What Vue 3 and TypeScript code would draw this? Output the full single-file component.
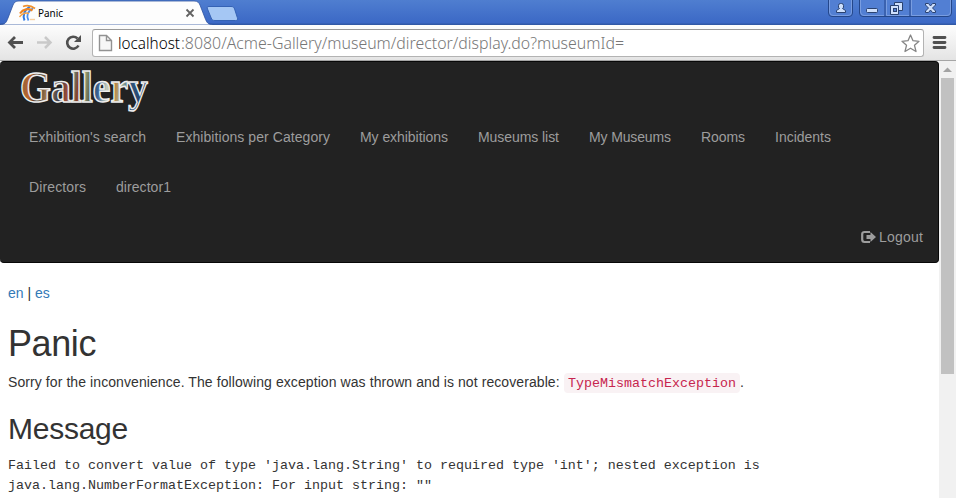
<script setup lang="ts">
interface NavItem { label: string; width: number }

const primary: NavItem[] = [
  { label: "Exhibition's search", width: 117 },
  { label: 'Exhibitions per Category', width: 154 },
  { label: 'My exhibitions', width: 88 },
  { label: 'Museums list', width: 81 },
  { label: 'My Museums', width: 82 },
  { label: 'Rooms', width: 44 },
  { label: 'Incidents', width: 56 },
]
const secondary: NavItem[] = [
  { label: 'Directors', width: 57 },
  { label: 'director1', width: 55 },
]
const rows = [primary, secondary]
</script>

<template>
  <div class="browser">
    <header class="titlebar">
      <svg class="tabs" width="240" height="25" viewBox="0 0 240 25">
        <path d="M0 25V24.500C5 24.500 6 23 8 18L13 5C14.500 2 15.500 1 19 1H194C198 1 199 3 200 5L205 18C207 23 208 24.500 213 24.500V25Z" fill="#fdfdfd" stroke="#2c52a0" stroke-width=".8" />
        <path d="M209 6.500H231C233 6.500 234 7.200 234.600 9L237.300 17.500C238 19.500 237.500 20.500 235.500 20.500H215C213 20.500 212 20 211.200 18L207.500 9C206.900 7.500 207 6.500 209 6.500Z" fill="#a5c7f4" stroke="#3562b4" />
        <g fill="none">
          <path d="M24.500 20.500C22.500 16 24 10 30 6.500" stroke="#2f7be4" stroke-width="2" />
          <path d="M28.500 20.500C26 16 27.500 11 33 8.500" stroke="#4b8ff0" stroke-width="1.800" />
          <path d="M23 6.500C27 5 31 5.500 35 8.500" stroke="#f0922e" stroke-width="1.800" />
          <path d="M20 13.500C23 9 29 8 32.500 10.500" stroke="#ef8420" stroke-width="2.200" />
          <path d="M19.500 17C22 14 26 12.500 29 13.500" stroke="#f4a247" stroke-width="1.400" />
          <path d="M30 19.500H35" stroke="#f7cfa0" stroke-width="1.400" />
        </g>
        <path d="M186.500 9.500L193.500 16.500M193.500 9.500L186.500 16.500" stroke="#626262" stroke-width="1.800" />
        <text class="tab-title" x="38" y="17" textLength="25" lengthAdjust="spacingAndGlyphs">Panic</text>
      </svg>
      <svg class="controls" width="128" height="18" viewBox="0 0 128 18">
        <g fill="#527fd3" stroke="#24478b">
          <path d="M.500 -2V13Q.500 16.500 4 16.500H21Q24.500 16.500 24.500 13V-2Z" />
          <path d="M31.500 -2V13Q31.500 16.500 35 16.500H120Q123.500 16.500 123.500 13V-2Z" />
          <path d="M57 0V16M82 0V16" />
        </g>
        <path d="M1.500 0V12Q2 15.500 5 15.500H20Q23.500 15.500 23.500 12V0M32.500 0V12Q33 15.500 36 15.500H56M58.500 0V15.500H81M83.500 0V15.500H119Q122.500 15.500 122.500 12V0" fill="none" stroke="#799de0" />
        <g fill="#cfe0fc" stroke="#2a4270">
          <path d="M10.500 5.500Q10.500 3.500 12.500 3.500H13.500Q15.500 3.500 15.500 5.500V7Q15.500 8 14.500 8.500L17.500 10.500V12.500H8.500V10.500L11.500 8.500Q10.500 8 10.500 7Z" />
          <rect x="38.500" y="8.500" width="11" height="4" rx="1" />
          <path d="M66.500 2.500H74.500V10.500H66.500Z" />
          <path d="M62.500 5.500H70.500V14.500H62.500Z" />
          <rect x="65.500" y="8.500" width="3" height="3" fill="#527fd3" />
          <path d="M97.500 3.500H100.500L102.500 6L104.500 3.500H107.500V5L104.500 8L107.500 11V12.500H104.500L102.500 10L100.500 12.500H97.500V11L100.500 8L97.500 5Z" />
        </g>
      </svg>
    </header>

    <div class="toolbar">
      <svg class="history" width="84" height="34" viewBox="0 0 84 34">
        <path d="M9 16.500H23M15 11L9.500 16.500L15 22" fill="none" stroke="#505050" stroke-width="2.800" />
        <path d="M37 16.500H51M45 11L50.500 16.500L45 22" fill="none" stroke="#c9c9c9" stroke-width="2.500" />
        <path d="M78.500 19.500A6 6 0 1 1 77.500 12.500" fill="none" stroke="#505050" stroke-width="2.600" />
        <path d="M81 9V16H74Z" fill="#505050" />
      </svg>
      <div class="address">
        <svg class="address-content" width="832" height="26" viewBox="0 0 832 26">
          <path d="M6.500 5.500H13.500L18.500 10.500V20.500H6.500ZM13.500 5.500V10.500H18.500" fill="#f7f7f7" stroke="#929292" stroke-width="1.400" />
          <text class="url host" x="25" y="19" textLength="62" lengthAdjust="spacingAndGlyphs">localhost</text>
          <text class="url path" x="88" y="19" textLength="443" lengthAdjust="spacingAndGlyphs">:8080/Acme-Gallery/museum/director/display.do?museumId=</text>
          <path d="M817.500 5L820 10.700L826 11.300L821.500 15.300L823 21.500L817.500 18.200L812 21.500L813.500 15.300L809 11.300L815 10.700Z" fill="#fff" stroke="#858585" stroke-width="1.300" stroke-linejoin="round" />
        </svg>
      </div>
      <svg class="menu" width="15" height="15" viewBox="0 0 15 15">
        <path d="M2 2.500H13M2 7.500H13M2 12.500H13" stroke="#505050" stroke-width="2.800" stroke-linecap="round" />
      </svg>
    </div>

    <div class="viewport">
      <main class="page">
        <nav class="navbar">
          <svg class="brand" width="160" height="50" viewBox="0 0 160 50">
            <defs>
              <linearGradient id="art" gradientUnits="userSpaceOnUse" x1="20" y1="10" x2="147" y2="20">
                <stop offset="0" stop-color="#7c6048" />
                <stop offset=".08" stop-color="#bd6528" />
                <stop offset=".15" stop-color="#302b29" />
                <stop offset=".23" stop-color="#b98a57" />
                <stop offset=".32" stop-color="#303547" />
                <stop offset=".38" stop-color="#9f4e36" />
                <stop offset=".42" stop-color="#579487" />
                <stop offset=".46" stop-color="#8b3e25" />
                <stop offset=".51" stop-color="#9da371" />
                <stop offset=".57" stop-color="#4c5145" />
                <stop offset=".62" stop-color="#34629a" />
                <stop offset=".69" stop-color="#c6cfbb" />
                <stop offset=".75" stop-color="#b97c3a" />
                <stop offset=".80" stop-color="#a9b99b" />
                <stop offset=".87" stop-color="#2c567c" />
                <stop offset="1" stop-color="#263c69" />
              </linearGradient>
            </defs>
            <text class="logo-text" x="20" y="39.500" textLength="128" lengthAdjust="spacingAndGlyphs" fill="url(#art)">Gallery</text>
          </svg>
          <div v-for="(row, i) in rows" :key="i" class="nav-row">
            <a v-for="item in row" :key="item.label" class="nav-item">
              <svg :width="item.width" height="20"><text x="0" y="15" :textLength="item.width">{{ item.label }}</text></svg>
            </a>
          </div>
          <div class="nav-row account">
            <a class="logout">
              <svg class="logout-icon" width="15" height="14" viewBox="0 0 15 14">
                <path d="M9 2H3.500Q1.200 2 1.200 4V9.500Q1.200 12 3.500 12H9" fill="none" stroke="#9d9d9d" stroke-width="2.200" />
                <path d="M5.500 5H9.500V2L15 7L9.500 12V9H5.500Z" fill="#9d9d9d" />
              </svg>
              <svg width="44" height="20"><text x="0" y="15" textLength="44">Logout</text></svg>
            </a>
          </div>
        </nav>
        <section class="content">
          <div class="languages"><a>en</a> | <a>es</a></div>
          <h1>Panic</h1>
          <p class="summary"><span class="sorry">Sorry for the inconvenience. The following exception was thrown and is not recoverable:</span><code>TypeMismatchException</code><span class="stop">.</span></p>
          <h2>Message</h2>
          <p class="message">Failed to convert value of type 'java.lang.String' to required type 'int'; nested exception is<br>java.lang.NumberFormatException: For input string: ""</p>
        </section>
      </main>
      <aside class="scrollbar">
        <svg width="17" height="17"><path d="M4 11L8.500 6.500L13 11Z" fill="#a3a3a3" /></svg>
        <div class="thumb"></div>
      </aside>
    </div>
  </div>
</template>

<style>
body { margin: 0; overflow: hidden; }
</style>

<style scoped>
* { box-sizing: border-box; }
.browser { width: 956px; height: 498px; display: flex; flex-direction: column; overflow: hidden; background: #fff; color: #333; font: 14px/20px "Liberation Sans", sans-serif; }
svg { display: block; flex: none; }
.titlebar { height: 25px; flex: none; display: flex; justify-content: space-between; background: linear-gradient(#4f7ed0, #3c69c6 90%, #2e559f); }
.tab-title { font: 11px "Noto Sans", sans-serif; fill: #000; }
.toolbar { height: 36px; flex: none; display: flex; padding-top: 1px; background: linear-gradient(#fdfdfd, #e4e4e4); border-bottom: 1px solid #a5a5a5; }
.history { margin-right: 8px; }
.address { width: 832px; height: 28px; margin-top: 3px; border: 1px solid #b3b3b3; border-top-color: #999; border-radius: 3px; background: #fff; overflow: hidden; }
.url { font: 300 16px "Noto Sans", sans-serif; }
.host { fill: #000; }
.path { fill: #777; }
.menu { margin: 9px 0 0 8px; }
.viewport { flex: 1; display: flex; min-height: 0; }
.page { width: 939px; flex: none; overflow: hidden; }
.navbar { height: 202px; border: 1px solid #080808; border-left-width: 0; border-radius: 4px; background: #222; }
.brand { height: 50px; overflow: visible; }
.logo-text { font: bold 45px "Liberation Serif", serif; stroke: #eee; stroke-width: 1.500px; }
.nav-row { height: 50px; display: flex; padding-left: 29px; padding-top: 15px; gap: 30px; }
.nav-row text { font: 14px "Liberation Sans", sans-serif; fill: #9d9d9d; }
.nav-row svg { overflow: visible; }
.account { justify-content: flex-end; padding-right: 15px; }
.logout { display: flex; gap: 3px; }
.logout-icon { margin-top: 3px; }
.content { padding: 20px 8px 0; }
.languages { height: 20px; }
.languages a { color: #337ab7; }
h1 { margin: 21px 0 8px; font: 36px/40px "Liberation Sans", sans-serif; letter-spacing: -.4px; }
p { margin: 0 0 10px; white-space: nowrap; }
.summary { display: flex; align-items: flex-start; height: 20px; }
.sorry { width: 556px; letter-spacing: .083px; }
code { height: 20px; padding: 0 4px; border-radius: 4px; background: #f9f2f4; color: #c7254e; font: 13.333px/22px "Liberation Mono", monospace; margin-top: 1px; }
h2 { margin: 20px 0 11px; font: 30px/33px "Liberation Sans", sans-serif; letter-spacing: -.25px; }
.message { font: 13.333px/20px "Liberation Mono", monospace; }
.scrollbar { width: 17px; background: #f1f1f1; }
.thumb { width: 13px; height: 296px; margin-left: 2px; background: #c1c1c1; }
</style>
